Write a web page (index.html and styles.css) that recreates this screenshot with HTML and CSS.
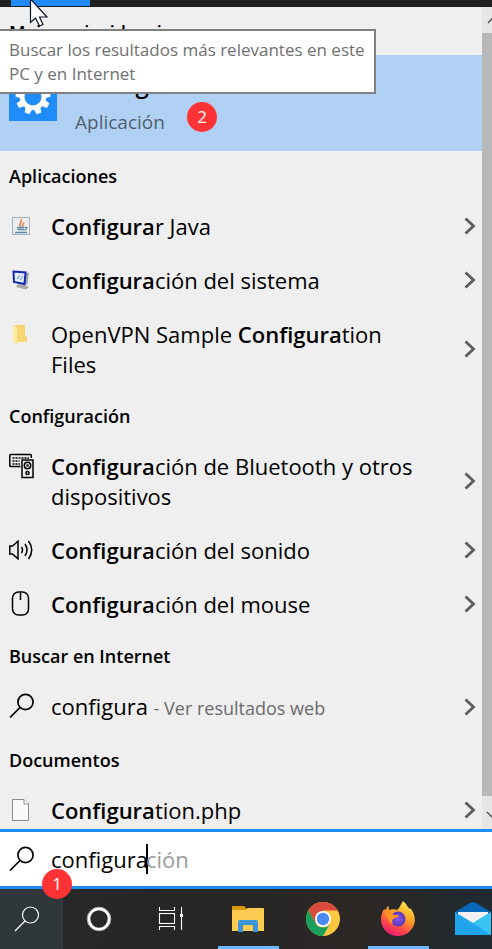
FILE: index.html
```html
<!DOCTYPE html>
<html lang="es">
<head>
  <meta charset="UTF-8">
  <meta name="viewport" content="width=device-width, initial-scale=1.0">
  <title>Buscar</title>
  <link rel="stylesheet" href="styles.css">
</head>
<body>
  <div class="top-strip">
    <div class="active-tab"></div>
    <div class="tooltip" role="tooltip">Buscar los resultados más relevantes en este PC y en Internet</div>
    <svg class="cursor" width="20" height="27" viewBox="0 0 20 27" aria-hidden="true">
      <path d="M1.500 -1V22.500L6.500 18L10.500 26L14 24.500L10.500 17H18Z" fill="#fff" stroke="#111526" stroke-width="1.200"/>
    </svg>
  </div>

  <!-- Iconos compartidos por las filas -->
  <svg class="defs" width="0" height="0" aria-hidden="true">
    <symbol id="chevron" viewBox="0 0 12 18"><path d="M1.500 1.500L9.500 9L1.500 16.500" fill="none" stroke="#5d5d5d" stroke-width="2.800"/></symbol>
    <symbol id="lens" viewBox="0 0 26 26"><g fill="none" stroke="currentColor" stroke-width="1.700"><circle cx="16.500" cy="9" r="7.600"/><path d="M11 14.500L1 24.500"/></g></symbol>
  </svg>

  <main class="panel">
    <div class="results">
      <h2>Mejor coincidencia</h2>
      <a class="best-match" href="#">
        <svg class="app-icon" width="48" height="48" viewBox="0 0 48 48" aria-hidden="true">
          <rect width="48" height="48" fill="#1f8cf9"/>
          <g fill="#fff">
            <path id="tooth" d="M20.500 12L21.500 6.500H26.500L27.500 12Z"/>
            <use href="#tooth" transform="rotate(40 24 24)"/>
            <use href="#tooth" transform="rotate(80 24 24)"/>
            <use href="#tooth" transform="rotate(120 24 24)"/>
            <use href="#tooth" transform="rotate(160 24 24)"/>
            <use href="#tooth" transform="rotate(200 24 24)"/>
            <use href="#tooth" transform="rotate(240 24 24)"/>
            <use href="#tooth" transform="rotate(280 24 24)"/>
            <use href="#tooth" transform="rotate(320 24 24)"/>
          </g>
          <circle cx="24" cy="24" r="10.800" fill="none" stroke="#fff" stroke-width="4.600"/>
        </svg>
        <span class="best-text">
          <span class="best-title"><b>Configura</b>ción</span>
          <span class="best-type">Aplicación</span>
        </span>
        <span class="badge badge-best">2</span>
      </a>

      <h2>Aplicaciones</h2>
      <ul>
        <li>
          <a href="#">
            <svg class="icon" width="26" height="26" viewBox="0 0 26 26" aria-hidden="true">
              <rect x="3.500" y="4.500" width="17" height="17" fill="#eaeef1" stroke="#a9b0b5"/>
              <path d="M12 14C8 11 14 9.500 12 6M14.500 13.500C12.500 12 14 10.500 15.500 9.500" fill="none" stroke="#e5803c" stroke-width="1.500"/>
              <path d="M8 14.500H15.500M8.500 16.500H15M6 19.500H18M16 14.500C19 14 18 16.500 15.500 17" fill="none" stroke="#6487a3" stroke-width="1.300"/>
            </svg>
            <span><b>Configura</b>r Java</span>
          </a>
          <button aria-label="Abrir"><svg width="12" height="18"><use href="#chevron"/></svg></button>
        </li>
        <li>
          <a href="#">
            <svg class="icon" width="26" height="26" viewBox="0 0 26 26" aria-hidden="true">
              <path d="M15 5L20 6L18.500 17L15.500 18Z" fill="#a3a5a0"/>
              <path d="M9 17L16 18L20 20L17 22.500L7 20Z" fill="#a9aaa6"/>
              <path d="M4.500 4.500L16.500 5.500L15.500 17L5 15Z" fill="#e4eefb" stroke="#1726b8" stroke-width="2"/>
              <path d="M8 12L11 8.500M11 13L14 9" stroke="#7d9ed8" stroke-width="1.200"/>
            </svg>
            <span><b>Configura</b>ción del sistema</span>
          </a>
          <button aria-label="Abrir"><svg width="12" height="18"><use href="#chevron"/></svg></button>
        </li>
        <li>
          <a href="#">
            <svg class="icon" width="26" height="26" viewBox="0 0 26 26" aria-hidden="true">
              <path d="M4 4H16V15L18 16V21H8L4 19Z" fill="#f7cf63"/>
              <path d="M4 4L8.500 6V24L4 21Z" fill="#fde9a2"/>
              <path d="M8.500 5H16V15L18 16V21H8.500Z" fill="#f8d573"/>
            </svg>
            <span>OpenVPN Sample <b>Configura</b>tion Files</span>
          </a>
          <button aria-label="Abrir"><svg width="12" height="18"><use href="#chevron"/></svg></button>
        </li>
      </ul>

      <h2>Configuración</h2>
      <ul>
        <li>
          <a href="#">
            <svg class="icon" width="26" height="26" viewBox="0 0 26 26" fill="none" stroke="#000" stroke-width="1.500" aria-hidden="true">
              <path d="M11.500 13.500H1.500Q0.800 13.500 0.800 12.500V2.500Q0.800 1.500 1.500 1.500H21.500Q22.300 1.500 22.300 2.500V5"/>
              <path d="M3.500 5H20M3.500 8H10.500M3.500 11H11" stroke-dasharray="2 1"/>
              <rect x="13" y="7" width="11" height="17.500"/>
              <circle cx="18.500" cy="12.500" r="3.200"/>
              <circle cx="18.500" cy="12.500" r="0.500"/>
              <circle cx="18.500" cy="20" r="1.600"/>
            </svg>
            <span><b>Configura</b>ción de Bluetooth y otros dispositivos</span>
          </a>
          <button aria-label="Abrir"><svg width="12" height="18"><use href="#chevron"/></svg></button>
        </li>
        <li>
          <a href="#">
            <svg class="icon" width="26" height="26" viewBox="0 0 26 26" fill="none" stroke="#000" stroke-width="1.500" aria-hidden="true">
              <path d="M0.800 9H3.500L9 4.200V21.800L3.500 17H0.800Z"/>
              <path d="M12.500 10Q14.500 13 12.500 16M16 7Q20 13 16 19M19.500 4Q26 13 19.500 22"/>
            </svg>
            <span><b>Configura</b>ción del sonido</span>
          </a>
          <button aria-label="Abrir"><svg width="12" height="18"><use href="#chevron"/></svg></button>
        </li>
        <li>
          <a href="#">
            <svg class="icon" width="26" height="26" viewBox="0 0 26 26" fill="none" stroke="#000" stroke-width="1.500" aria-hidden="true">
              <rect x="3.500" y="1" width="16" height="23" rx="6"/>
              <path d="M11.500 1V9"/>
            </svg>
            <span><b>Configura</b>ción del mouse</span>
          </a>
          <button aria-label="Abrir"><svg width="12" height="18"><use href="#chevron"/></svg></button>
        </li>
      </ul>

      <h2>Buscar en Internet</h2>
      <ul>
        <li>
          <a href="#">
            <svg class="icon" width="26" height="26" aria-hidden="true"><use href="#lens"/></svg>
            <span>configura <small>- Ver resultados web</small></span>
          </a>
          <button aria-label="Abrir"><svg width="12" height="18"><use href="#chevron"/></svg></button>
        </li>
      </ul>

      <h2>Documentos</h2>
      <ul>
        <li>
          <a href="#">
            <svg class="icon" width="26" height="26" viewBox="0 0 26 26" aria-hidden="true">
              <path d="M3.500 2.500H15L19.500 7V23.500H3.500Z" fill="#fafafa" stroke="#8b8b8b"/>
              <path d="M15 2.500V7H19.500" fill="#fff" stroke="#8b8b8b"/>
            </svg>
            <span><b>Configura</b>tion.php</span>
          </a>
          <button aria-label="Abrir"><svg width="12" height="18"><use href="#chevron"/></svg></button>
        </li>
      </ul>
    </div>

    <div class="scrollbar">
      <svg width="20" height="26" viewBox="0 0 20 26"><path d="M6 16L11 10.500L16 16" fill="none" stroke="#505050" stroke-width="1.400"/></svg>
      <div class="thumb"></div>
      <svg width="20" height="33" viewBox="0 0 20 33"><path d="M5 16L11 22L17 16" fill="none" stroke="#505050" stroke-width="1.400"/></svg>
    </div>
  </main>

  <form class="search-box">
    <svg class="icon" width="26" height="26" aria-hidden="true"><use href="#lens"/></svg>
    <input type="text" value="configura" aria-label="Buscar" autocomplete="off">
    <span class="caret"></span>
    <span class="suggestion">ción</span>
    <span class="badge badge-search">1</span>
  </form>

  <nav class="taskbar">
    <button class="tool search-tool" aria-label="Buscar">
      <svg width="26" height="26" viewBox="0 0 26 26" fill="none" stroke="#fff" stroke-width="1.200"><circle cx="16.500" cy="9" r="8"/><path d="M11 15L1 25"/></svg>
    </button>
    <button class="tool" aria-label="Cortana">
      <svg width="26" height="26" viewBox="0 0 26 26" fill="none"><circle cx="13" cy="13" r="10.200" stroke="#fff" stroke-width="3"/><circle cx="13" cy="13" r="11.800" stroke="#aaa" stroke-width="1"/></svg>
    </button>
    <button class="tool" aria-label="Vista de tareas">
      <svg width="26" height="26" viewBox="0 0 26 26" fill="none" stroke="#fff" stroke-width="1.100"><path d="M1.500 1V4.500H16.500V1M1.500 24V20.500H16.500V24M23.500 1V24"/><rect x="1.500" y="7.500" width="15" height="10"/><rect x="22" y="8" width="3" height="3" fill="#fff" stroke="none"/></svg>
    </button>
    <div class="apps">
      <button class="app open" aria-label="Explorador de archivos">
        <svg width="36" height="36" viewBox="0 0 36 36">
          <path d="M2 6Q2 5 3 5H14L17 8V12H2Z" fill="#d99a0b"/>
          <path d="M2 9H15L18 7H33Q34 7 34 8V30H2Z" fill="#fdcb52"/>
          <path d="M8 31V21Q8 19 10 19H26Q28 19 28 21V31H23V24H13V31Z" fill="#3a97dc"/>
        </svg>
      </button>
      <button class="app" aria-label="Google Chrome">
        <svg width="36" height="36" viewBox="0 0 36 36">
          <circle cx="18" cy="18" r="17" fill="#fdc83f"/>
          <path d="M18 1A17 17 0 0 1 32.700 9.500H18L10.500 22.200L3.300 9.500A17 17 0 0 1 18 1Z" fill="#da4a3d"/>
          <path d="M3.300 9.500L10.600 22.300A8.500 8.500 0 0 0 25.400 22.300L18 35A17 17 0 0 1 3.300 9.500Z" fill="#199e5b"/>
          <circle cx="18" cy="18" r="8" fill="#fff"/>
          <circle cx="18" cy="18" r="6.200" fill="#4889f4"/>
        </svg>
      </button>
      <button class="app open" aria-label="Firefox">
        <svg width="36" height="36" viewBox="0 0 36 36">
          <defs>
            <linearGradient id="fire" x1="0.800" y1="0" x2="0.300" y2="1">
              <stop offset="0" stop-color="#fff04a"/><stop offset="0.450" stop-color="#ff9a25"/><stop offset="0.750" stop-color="#ff454d"/><stop offset="1" stop-color="#e51a78"/>
            </linearGradient>
            <radialGradient id="globe"><stop offset="0" stop-color="#8c57f5"/><stop offset="1" stop-color="#5b36b5"/></radialGradient>
          </defs>
          <path d="M23 0C28 4 27 7 31 8C34 12 35.500 17 34.500 22C32 31 25 35 18 35C8 35 1 27.500 1 18C1 13 3 10 4 8L6 9C6 7 7 6 8.500 5L9 9C12 8 15 8 17 9C19 8 21 3 23 0Z" fill="url(#fire)"/>
          <circle cx="18" cy="18" r="7.500" fill="url(#globe)"/>
          <path d="M5 13C9 11 12 12 14 14H19C18 17 15 17 13 18C12 20 12 21 13 23C10 22 8 20 8 17Z" fill="#ff9621"/>
        </svg>
      </button>
      <button class="app" aria-label="Correo">
        <svg width="36" height="36" viewBox="0 0 36 36">
          <path d="M0 11L15 2Q18 0 21 2L36 11V16H0Z" fill="#0867b8"/>
          <path d="M3 11H33V20L18 28L3 20Z" fill="#f2f2f2"/>
          <path d="M0 11L18 22L36 11V34H0Z" fill="#20a4ec"/>
          <path d="M18 22L36 11V34Z" fill="#37c4f4"/>
        </svg>
      </button>
    </div>
  </nav>
</body>
</html>
```
FILE: styles.css
```css
* {
  box-sizing: border-box;
}

body {
  margin: 0;
  height: 100vh;
  display: flex;
  flex-direction: column;
  overflow: hidden;
  background-color: #efefef;
  color: #000;
  font-family: 'Open Sans', 'Noto Sans', sans-serif;
  font-size: 22px;
  line-height: 30px;
}

button {
  padding: 0;
  border: none;
  background: none;
  display: flex;
  align-items: center;
  justify-content: center;
}

a {
  color: inherit;
  text-decoration: none;
}

b {
  font-weight: 600;
}

.defs {
  position: absolute;
}

/* Borde superior de la ventana */
.top-strip {
  position: relative;
  z-index: 2;
  flex: none;
  height: 7px;
  padding-left: 11px;
  background-color: #202020;
}

.active-tab {
  width: 79px;
  height: 6px;
  background-color: #1f8cf9;
}

.tooltip {
  position: absolute;
  top: 29px;
  left: -2px;
  width: 378px;
  padding: 7px 9px 6px;
  border: 2px solid #808080;
  background-color: #fff;
  color: #707070;
  font-size: 17px;
  line-height: 24px;
}

.cursor {
  position: absolute;
  top: 0;
  left: 29px;
}

/* Resultados */
.panel {
  flex: 1;
  min-height: 0;
  display: flex;
  overflow: hidden;
}

.results {
  flex: 1;
  min-width: 0;
}

.results h2 {
  margin: 0;
  padding: 2px 9px 0;
  font-size: 18px;
  font-weight: 600;
  line-height: 46px;
}

.results ul {
  margin: 0;
  padding: 0;
  list-style: none;
}

.results li {
  display: flex;
}

.results li a {
  flex: 1;
  display: flex;
  gap: 16px;
  padding: 12px 40px 12px 9px;
}

.results li .icon {
  margin-top: 2px;
}

.results li button {
  width: 24px;
}

.results small {
  color: #6b6b6b;
  font-size: 18px;
}

.icon {
  flex: none;
}

.best-match {
  position: relative;
  display: flex;
  gap: 18px;
  height: 96px;
  padding: 18px 9px 0;
  background-color: #b0d1f4;
}

.app-icon {
  flex: none;
}

.best-text {
  display: flex;
  flex-direction: column;
  gap: 12px;
}

.best-title {
  font-size: 24px;
  line-height: 22px;
}

.best-type {
  color: #50606f;
  font-size: 19px;
}

.badge {
  position: absolute;
  width: 30px;
  height: 30px;
  border-radius: 50%;
  background-color: #ff3236;
  color: #fff;
  font-size: 17px;
  text-align: center;
}

.badge-best {
  top: 47px;
  left: 187px;
}

.badge-search {
  top: 37px;
  left: 42px;
}

.scrollbar {
  width: 10px;
  display: flex;
  flex-direction: column;
  overflow: hidden;
  background-color: #e6e6e6;
}

.scrollbar svg {
  flex: none;
}

.thumb {
  flex: 1;
  background-color: #b8b8b8;
}

/* Cuadro de búsqueda */
.search-box {
  position: relative;
  z-index: 1;
  flex: none;
  display: flex;
  align-items: center;
  height: 60px;
  padding: 0 9px;
  border-top: 3px solid #1f8cf9;
  border-bottom: 3px solid #1f8cf9;
  background-color: #fff;
}

.search-box input {
  field-sizing: content;
  margin-left: 16px;
  padding: 0;
  border: none;
  outline: none;
  background: none;
  color: #000;
  font: inherit;
}

.caret {
  width: 2px;
  height: 30px;
  margin-left: -2px;
  background-color: #000;
}

.suggestion {
  margin-left: -2px;
  color: #9b9b9b;
}

/* Barra de tareas */
.taskbar {
  flex: none;
  display: flex;
  height: 60px;
  background: linear-gradient(90deg, #282b2b, #262626 30%, #2b2725 75%, #202b31);
}

.tool {
  flex: none;
  width: 72px;
}

.search-tool {
  width: 63px;
  padding-right: 9px;
  background-color: #30373a;
}

.apps {
  display: flex;
  padding-left: 3px;
}

.app {
  position: relative;
  flex: none;
  width: 75px;
}

.open::after {
  content: "";
  position: absolute;
  right: 6px;
  bottom: 0;
  left: 8px;
  height: 3px;
  background-color: #70b5ff;
}
```
